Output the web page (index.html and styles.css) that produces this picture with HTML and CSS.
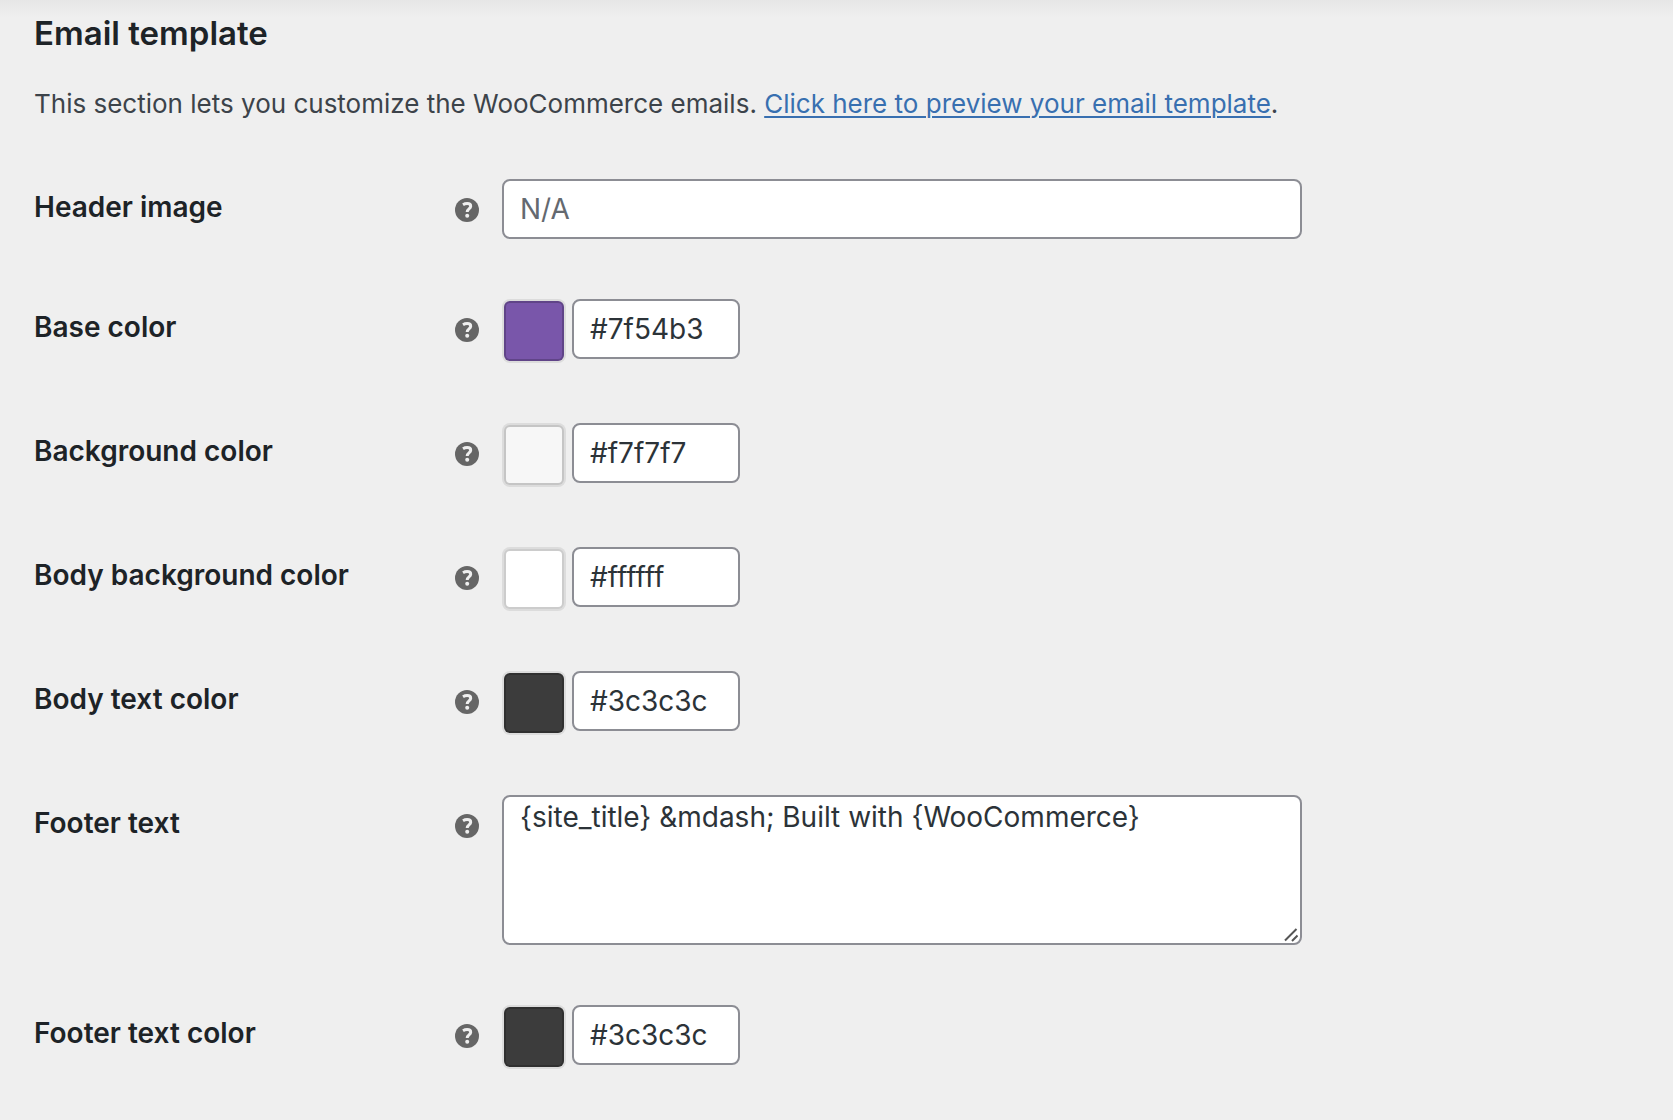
FILE: index.html
```html
<!DOCTYPE html>
<html lang="en">
  <head>
    <meta charset="UTF-8" />
    <meta name="viewport" content="width=device-width, initial-scale=1.0" />
    <title>Email template</title>
    <link rel="stylesheet" href="styles.css">
  </head>
  <body>
    <svg class="sprite" aria-hidden="true">
      <symbol id="help" viewBox="0 0 24 24">
        <circle cx="12" cy="12" r="12" fill="#666" />
        <path d="M8 6.800C9.400 5.900 10.600 5.600 12.200 5.600c2.200 0 3.500 1 3.500 2.700 0 2.600-3.500 2.600-3.500 5.600" fill="none" stroke="#efefef" stroke-width="3" />
        <circle cx="12.200" cy="17.700" r="2" fill="#efefef" />
      </symbol>
    </svg>

    <form class="settings">
      <h2>Email template</h2>
      <p>
        This section lets you customize the WooCommerce emails.
        <a href="#">Click here to preview your email template</a>.
      </p>

      <div class="row">
        <label for="header_image">Header image</label>
        <svg class="help"><use href="#help" /></svg>
        <div class="field">
          <input type="text" id="header_image" class="wide" placeholder="N/A" />
        </div>
      </div>

      <div class="row">
        <label for="base_color">Base color</label>
        <svg class="help"><use href="#help" /></svg>
        <div class="field color">
          <button type="button" class="swatch base" aria-label="Pick base color"></button>
          <input type="text" id="base_color" value="#7f54b3" spellcheck="false" />
        </div>
      </div>

      <div class="row">
        <label for="background_color">Background color</label>
        <svg class="help"><use href="#help" /></svg>
        <div class="field color">
          <button type="button" class="swatch background" aria-label="Pick background color"></button>
          <input type="text" id="background_color" value="#f7f7f7" spellcheck="false" />
        </div>
      </div>

      <div class="row">
        <label for="body_background_color">Body background color</label>
        <svg class="help"><use href="#help" /></svg>
        <div class="field color">
          <button type="button" class="swatch body-background" aria-label="Pick body background color"></button>
          <input type="text" id="body_background_color" value="#ffffff" spellcheck="false" />
        </div>
      </div>

      <div class="row">
        <label for="text_color">Body text color</label>
        <svg class="help"><use href="#help" /></svg>
        <div class="field color">
          <button type="button" class="swatch text" aria-label="Pick body text color"></button>
          <input type="text" id="text_color" value="#3c3c3c" spellcheck="false" />
        </div>
      </div>

      <div class="row">
        <label for="footer_text">Footer text</label>
        <svg class="help"><use href="#help" /></svg>
        <div class="field">
          <textarea id="footer_text" class="wide" spellcheck="false">{site_title} &amp;mdash; Built with {WooCommerce}</textarea>
          <svg class="grip" viewBox="0 0 14 14" aria-hidden="true">
            <path d="M1 12.500 12.500 1M8 13l5.500-5.500" fill="none" stroke="#555" stroke-width="2" />
          </svg>
        </div>
      </div>

      <div class="row">
        <label for="footer_text_color">Footer text color</label>
        <svg class="help"><use href="#help" /></svg>
        <div class="field color">
          <button type="button" class="swatch text" aria-label="Pick footer text color"></button>
          <input type="text" id="footer_text_color" value="#3c3c3c" spellcheck="false" />
        </div>
      </div>
    </form>
  </body>
</html>
```
FILE: styles.css
```css
* {
  box-sizing: border-box;
}

body {
  margin: 0;
  background: #efefef linear-gradient(#e6e6e6, #efefef) no-repeat;
  background-size: 100% 18px;
  color: #3c434a;
  font-family: Inter, "Liberation Sans", sans-serif;
  font-size: 26px;
  line-height: 40px;
}

.sprite {
  display: none;
}

.settings {
  padding: 13px 34px 0;
}

h2 {
  margin: 0;
  color: #1d2327;
  font-size: 33px;
  font-weight: 600;
  line-height: 40px;
}

p {
  margin: 31px 0 25px;
}

a {
  color: #386fb0;
  text-underline-offset: 3px;
  text-decoration-thickness: 2px;
}

.row {
  display: grid;
  grid-template-columns: 421px 47px minmax(0, 800px);
  align-items: start;
  padding: 30px 0;
}

.row label {
  padding-top: 8px;
  color: #1d2327;
  font-size: 28px;
  font-weight: 600;
}

.help {
  width: 24px;
  height: 24px;
  margin-top: 19px;
}

.field {
  position: relative;
  display: flex;
}

.color {
  gap: 8px;
  padding: 0 2px 4px;
}

input,
textarea {
  width: 168px;
  height: 60px;
  padding: 0 16px;
  border: 2px solid #8c8d94;
  border-radius: 8px;
  background: #fff;
  color: #2c3338;
  font: inherit;
  font-size: 28px;
}

input::placeholder {
  color: #646970;
}

.wide {
  width: 100%;
}

textarea {
  height: 150px;
  resize: none;
}

.grip {
  position: absolute;
  right: 4px;
  bottom: 3px;
  width: 14px;
  height: 14px;
}

.swatch {
  width: 60px;
  height: 60px;
  margin: 2px 0 0;
  padding: 0;
  border: 2px solid rgba(0, 0, 0, 0.2);
  border-radius: 6px;
  box-shadow: 0 0 0 2px rgba(0, 0, 0, 0.08);
}

/* keeps color rows at the height of the input plus the swatch ring */
.color .swatch {
  margin-bottom: -2px;
}

.base {
  background: #7956aa;
}

.background {
  background: #f7f7f7;
}

.body-background {
  background: #fff;
}

.text {
  background: #3c3c3c;
}
```
